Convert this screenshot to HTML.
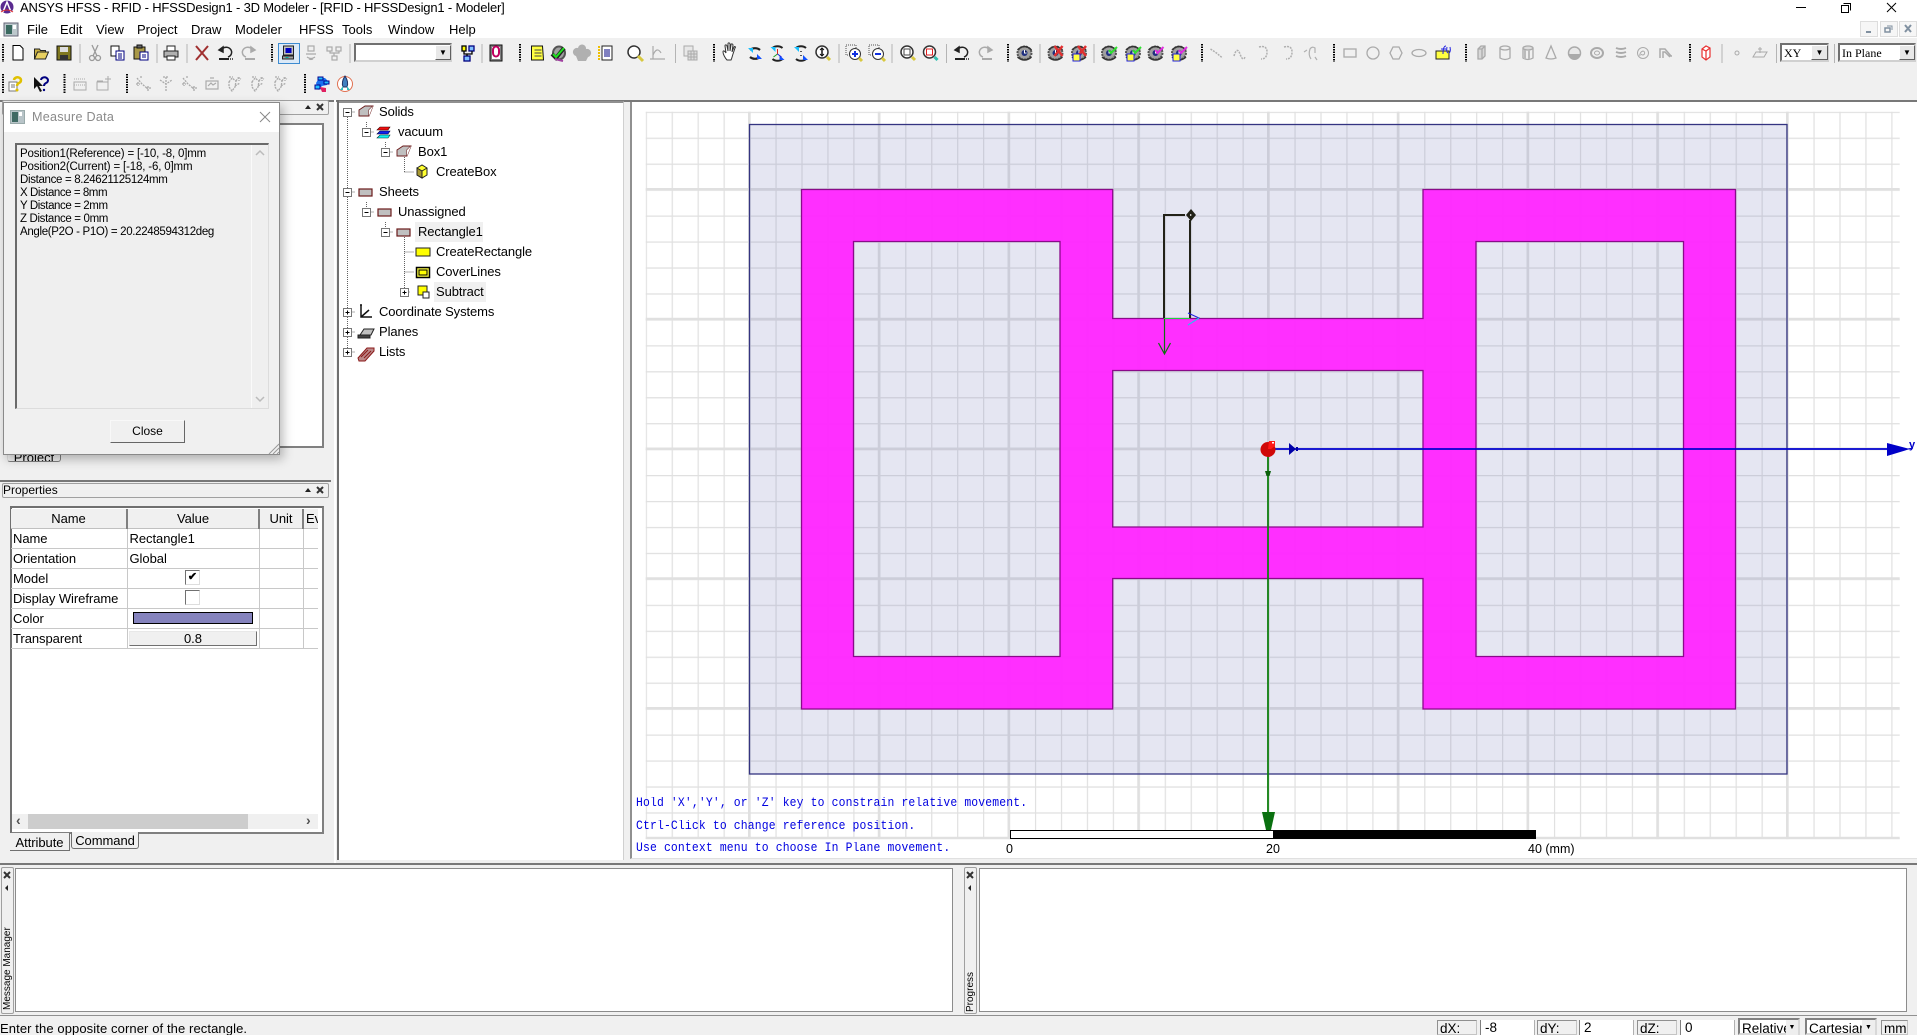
<!DOCTYPE html>
<html><head><meta charset="utf-8"><title>ANSYS HFSS</title>
<style>
html,body{margin:0;padding:0;background:#f0f0f0}
#p{position:relative;width:1917px;height:1035px;overflow:hidden;background:#f0f0f0;font:13px "Liberation Sans",sans-serif;color:#000}
#p div{position:absolute;box-sizing:border-box}
.t{white-space:nowrap;line-height:16px;height:16px}
.tr{white-space:nowrap;line-height:18px;height:18px;font-size:13px;letter-spacing:-.1px}
.m{font:11.4px "Liberation Mono",monospace;letter-spacing:.15px;color:#0000e0;white-space:nowrap;line-height:14px;transform-origin:left center;transform:scaleY(1.12)}
.sunk{border:2px solid #808080;background:#fff}
.bar{border:1px solid #a0a0a0;border-radius:2px;background:#f0f0f0}
.lb{background:#f0f0f0;border:1px solid #c4c4c4;border-top-color:#909090;border-left-color:#909090;padding-left:2px;line-height:16px;font-size:13.5px;white-space:nowrap;overflow:hidden}
.fd{background:#fff;border-left:1px solid #808080;border-right:1px solid #b0b0b0;padding-left:4px;line-height:16px;font-size:13.5px}
.cb{background:#fff;border:2px solid;border-color:#808080 #d8d8d8 #d8d8d8 #808080;white-space:nowrap;overflow:hidden}
table{border-collapse:collapse;table-layout:fixed;font-size:13px;letter-spacing:-.05px}
td{border:1px solid #c8c8c8;border-top:0;border-left:0;height:20px;padding:0 0 0 2px;box-sizing:border-box;overflow:hidden;white-space:nowrap}
th{font-weight:normal;height:19px;background:#f0f0f0;border-right:2px solid #808080;border-bottom:1px solid #c0c0c0;padding:0;box-sizing:border-box;overflow:hidden}
.dl{display:block;height:13px}
</style></head><body><div id="p">

<!-- title + menu -->
<div style="left:0;top:0;width:1917px;height:38px;background:#fff"></div>
<div class="t" style="left:20px;top:0;font-size:13px;letter-spacing:-.18px">ANSYS HFSS - RFID - HFSSDesign1 - 3D Modeler - [RFID - HFSSDesign1 - Modeler]</div>
<div class="t" style="left:27px;top:22px;font-size:13px">File</div>
<div class="t" style="left:60px;top:22px">Edit</div>
<div class="t" style="left:96px;top:22px">View</div>
<div class="t" style="left:137px;top:22px">Project</div>
<div class="t" style="left:191px;top:22px">Draw</div>
<div class="t" style="left:235px;top:22px">Modeler</div>
<div class="t" style="left:299px;top:22px">HFSS</div>
<div class="t" style="left:342px;top:22px">Tools</div>
<div class="t" style="left:388px;top:22px">Window</div>
<div class="t" style="left:449px;top:22px">Help</div>
<div style="left:0;top:100px;width:1917px;height:2px;background:#787878"></div>

<!-- left column panels -->
<div class="bar" style="left:2px;top:100px;width:327px;height:15px"></div>
<div class="sunk" style="left:12px;top:123px;width:312px;height:325px"></div>
<div style="left:7px;top:446px;width:54px;height:16px;background:#f0f0f0;border:1px solid #808080;border-top:0;border-left-color:#ddd;border-radius:0 0 3px 3px;text-align:center;line-height:24px;font-size:13px;overflow:hidden">Project</div>
<div style="left:0;top:480px;width:331px;height:2px;background:#787878"></div>
<div class="bar" style="left:2px;top:483px;width:327px;height:15px;line-height:13px;font-size:12px">Properties</div>
<div style="left:10px;top:506px;width:314px;height:328px;border:2px solid;border-color:#707070 #808080 #808080 #707070;background:#fff"></div>
<div style="left:11px;top:509px;overflow:hidden;width:307px;height:300px">
<table style="width:307px">
<colgroup><col style="width:116px"><col style="width:132px"><col style="width:44px"><col style="width:15px"></colgroup>
<tr><th>Name</th><th>Value</th><th>Unit</th><th style="border-right:0;text-align:left;padding-left:2px">Ev</th></tr>
<tr><td>Name</td><td>Rectangle1</td><td></td><td style="border-right:0"></td></tr>
<tr><td>Orientation</td><td>Global</td><td></td><td style="border-right:0"></td></tr>
<tr><td>Model</td><td></td><td></td><td style="border-right:0"></td></tr>
<tr><td>Display Wireframe</td><td></td><td></td><td style="border-right:0"></td></tr>
<tr><td>Color</td><td></td><td></td><td style="border-right:0"></td></tr>
<tr><td>Transparent</td><td></td><td></td><td style="border-right:0"></td></tr>
</table></div>
<div style="left:185px;top:570px;width:15px;height:15px;border:1px solid;border-color:#707070 #ddd #ddd #707070;background:#fff;font-size:11px;line-height:13px;text-align:center;font-weight:bold">✔</div>
<div style="left:185px;top:590px;width:15px;height:15px;border:1px solid;border-color:#707070 #ddd #ddd #707070;background:#fff"></div>
<div style="left:133px;top:612px;width:120px;height:12px;background:#8583bd;border:1px solid #000"></div>
<div style="left:129px;top:631px;width:128px;height:15px;background:#f0f0f0;border:1px solid;border-color:#e8e8e8 #707070 #707070 #e8e8e8;text-align:center;line-height:14px;font-size:13px">0.8</div>
<div style="left:12px;top:814px;width:306px;height:15px;background:#f0f0f0"></div>
<div style="left:28px;top:814px;width:220px;height:15px;background:#cdcdcd"></div>
<div style="left:16px;top:813px;font-size:14px;line-height:15px;color:#505050;font-weight:bold">‹</div>
<div style="left:306px;top:813px;font-size:14px;line-height:15px;color:#505050;font-weight:bold">›</div>
<div style="left:10px;top:833px;width:60px;height:18px;background:#f0f0f0;border-right:1px solid #707070;border-bottom:1px solid #707070;text-align:center;line-height:19px;font-size:13px;letter-spacing:-.05px">Attribute</div>
<div style="left:71px;top:832px;width:68px;height:17px;background:#f0f0f0;border:1px solid #707070;border-top:0;border-radius:0 0 3px 3px;text-align:center;line-height:17px;font-size:13px;letter-spacing:-.05px">Command</div>
<div style="left:334px;top:100px;width:2px;height:763px;background:#ffffff"></div>
<div style="left:337px;top:100px;width:2px;height:760px;background:#707070"></div>

<!-- tree panel -->
<div style="left:339px;top:101px;width:285px;height:759px;background:#fff;border-top:2px solid #909090;border-right:1px solid #d0d0d0"></div>
<div class="tr" style="left:379px;top:103px">Solids</div>
<div class="tr" style="left:398px;top:123px">vacuum</div>
<div class="tr" style="left:418px;top:143px">Box1</div>
<div class="tr" style="left:436px;top:163px">CreateBox</div>
<div class="tr" style="left:379px;top:183px">Sheets</div>
<div class="tr" style="left:398px;top:203px">Unassigned</div>
<div style="left:415px;top:222px;width:68px;height:20px;background:#f0f0f0"></div>
<div class="tr" style="left:418px;top:223px">Rectangle1</div>
<div class="tr" style="left:436px;top:243px">CreateRectangle</div>
<div class="tr" style="left:436px;top:263px">CoverLines</div>
<div style="left:434px;top:282px;width:52px;height:20px;background:#f0f0f0"></div>
<div class="tr" style="left:436px;top:283px">Subtract</div>
<div class="tr" style="left:379px;top:303px">Coordinate Systems</div>
<div class="tr" style="left:379px;top:323px">Planes</div>
<div class="tr" style="left:379px;top:343px">Lists</div>

<!-- canvas panel -->
<div style="left:630px;top:102px;width:1287px;height:757px;background:#fff;border-left:2px solid #909090;border-bottom:1px solid #e0e0e0"></div>

<!-- bottom panels -->
<div style="left:0;top:863px;width:1917px;height:2px;background:#787878"></div>
<div class="bar" style="left:1px;top:867px;width:13px;height:147px"></div>
<div style="left:15px;top:868px;width:938px;height:144px;background:#fff;border:1px solid #8c8c8c"></div>
<div class="bar" style="left:964px;top:867px;width:13px;height:147px"></div>
<div style="left:979px;top:868px;width:928px;height:144px;background:#fff;border:1px solid #8c8c8c"></div>
<div style="left:-34px;top:961px;width:84px;height:14px;transform:rotate(-90deg);font-size:10px;line-height:14px;white-space:nowrap;text-align:left">Message Manager</div>
<div style="left:951px;top:985px;width:40px;height:14px;transform:rotate(-90deg);font-size:10px;line-height:14px;white-space:nowrap">Progress</div>
<div style="left:0;top:1015px;width:1917px;height:1px;background:#909090"></div>
<div class="t" style="left:0;top:1021px;font-size:13px;letter-spacing:.1px">Enter the opposite corner of the rectangle.</div>
<div class="lb" style="left:1437px;top:1020px;width:40px;height:15px">dX:</div>
<div class="fd" style="left:1480px;top:1020px;width:55px;height:15px">-8</div>
<div class="lb" style="left:1537px;top:1020px;width:40px;height:15px">dY:</div>
<div class="fd" style="left:1579px;top:1020px;width:55px;height:15px">2</div>
<div class="lb" style="left:1637px;top:1020px;width:40px;height:15px">dZ:</div>
<div class="fd" style="left:1680px;top:1020px;width:55px;height:15px">0</div>
<div class="cb" style="left:1738px;top:1018px;width:62px;height:17px;font-size:13.5px;line-height:18px;padding-left:2px">Relative</div>
<div style="left:1786px;top:1020px;width:12px;height:15px;background:#eee;font-size:7px;line-height:15px;text-align:center">▼</div>
<div class="cb" style="left:1805px;top:1018px;width:72px;height:17px;font-size:13.5px;line-height:18px;padding-left:2px">Cartesian</div>
<div style="left:1862px;top:1020px;width:13px;height:15px;background:#eee;font-size:7px;line-height:15px;text-align:center">▼</div>
<div class="lb" style="left:1881px;top:1020px;width:27px;height:15px">mm</div>

<!-- toolbar combos -->
<div style="left:354px;top:43px;width:98px;height:19px;background:#fff;border:2px solid;border-color:#707070 #d0d0d0 #d0d0d0 #707070"></div>
<div style="left:435px;top:45px;width:16px;height:15px;background:#e8e8e8;border:1px solid;border-color:#fff #606060 #606060 #fff;font-size:8px;line-height:13px;text-align:center">▼</div>
<div style="left:1780px;top:43px;width:49px;height:19px;background:#fff;border:2px solid;border-color:#707070 #d0d0d0 #d0d0d0 #707070;font:12px/16px 'Liberation Serif',serif;padding-left:2px">XY</div>
<div style="left:1811px;top:45px;width:17px;height:15px;background:#e8e8e8;border:1px solid;border-color:#fff #606060 #606060 #fff;font-size:8px;line-height:13px;text-align:center">▼</div>
<div style="left:1838px;top:43px;width:78px;height:19px;background:#fff;border:2px solid;border-color:#707070 #d0d0d0 #d0d0d0 #707070;font:12px/16px 'Liberation Serif',serif;padding-left:2px">In Plane</div>
<div style="left:1899px;top:45px;width:16px;height:15px;background:#e8e8e8;border:1px solid;border-color:#fff #606060 #606060 #fff;font-size:8px;line-height:13px;text-align:center">▼</div>
<div style="left:278px;top:43px;width:22px;height:21px;background:#dbe9f7;border:1px solid #3d8bd0"></div>

<!-- full page svg: graphics -->
<svg width="1917" height="1035" viewBox="0 0 1917 1035" style="position:absolute;left:0;top:0" xmlns="http://www.w3.org/2000/svg">
<defs>
<pattern id="gn" x="645.7" y="111.7" width="25.95" height="25.95" patternUnits="userSpaceOnUse"><path d="M.6 0V25.95M0 .6H25.95" stroke="#e0e0e0" stroke-width="1.2" fill="none"/></pattern>
<pattern id="gm" x="748" y="188" width="129.75" height="129.75" patternUnits="userSpaceOnUse"><path d="M1.2 0V129.75M0 1.2H129.75" stroke="#e0e0e0" stroke-width="2.4" fill="none"/></pattern>

<g id="new"><path d="M-5-7.5h7l3 3v11.5h-10z" fill="#fff" stroke="#000"/></g>
<g id="open"><path d="M-7 6v-10h5l1 1.500h5v8.500z" fill="#c8b040" stroke="#222"/><path d="M-7 6l3-7h11l-3 7z" fill="#e8d060" stroke="#222"/></g>
<g id="save"><rect x="-7" y="-7" width="14" height="14" fill="#807820" stroke="#111"/><rect x="-4" y="-6" width="8" height="5" fill="#ddd"/><rect x="-4" y="2" width="8" height="5" fill="#333"/></g>
<g id="cut" fill="none" stroke="#9a9a9a" stroke-width="1.300"><path d="M-3-8L2 3M3-8L-2 3"/><circle cx="-3" cy="5" r="2.500"/><circle cx="3" cy="5" r="2.500"/></g>
<g id="copy"><path d="M-7-7h8v10h-8z" fill="#fff" stroke="#111"/><path d="M-2-2h8v9h-8z" fill="#fff" stroke="#000080"/><path d="M0 1h4M0 3h4M0 5h4" stroke="#000080"/></g>
<g id="paste"><rect x="-7" y="-6" width="11" height="12" fill="#a89848" stroke="#111"/><rect x="-4" y="-8" width="5" height="3" fill="#666" stroke="#111"/><path d="M-1-1h8v8h-8z" fill="#fff" stroke="#000080"/><path d="M1 2h4M1 4h4" stroke="#000080"/></g>
<g id="print"><path d="M-4-7h8v5h-8z" fill="#fff" stroke="#222"/><rect x="-7" y="-2" width="14" height="6" fill="#b0b0b0" stroke="#222"/><path d="M-4 3h8v4h-8z" fill="#fff" stroke="#222"/></g>
<g id="del"><path d="M-6-7L6 7M6-7L-6 7" stroke="#a03030" stroke-width="2"/></g>
<g id="undo" fill="none" stroke="#222" stroke-width="1.500"><path d="M-4-4a5.500 5 0 1 1 6 8"/><path d="M-7-3l4-3v5z" fill="#222"/><path d="M-7 6h10" stroke-width="2"/><path d="M4 6h3" stroke-dasharray="1 1"/></g>
<g id="redo" fill="none" stroke="#aaa" stroke-width="1.500"><path d="M4-4a5.500 5 0 1 0-6 8"/><path d="M7-3l-4-3v5z" fill="#aaa"/><path d="M-3 6h10" stroke-width="2"/></g>
<g id="pc"><rect x="-5" y="-7" width="10" height="9" fill="#c0c0c0" stroke="#222"/><rect x="-3" y="-5" width="6" height="5" fill="#0000c0"/><rect x="-6" y="3" width="11" height="3" fill="#a0a0a0" stroke="#222"/><rect x="-3" y="4" width="3" height="1" fill="#00b0a0"/></g>
<g id="gnet" fill="none" stroke="#aaa" stroke-width="1.200"><rect x="-3" y="-7" width="6" height="5"/><path d="M-5 1h10M-4 4q4 3 8 0M-2 6q2 1 4 0"/></g>
<g id="gtree" fill="none" stroke="#aaa" stroke-width="1.200"><rect x="-7" y="-6" width="5" height="4"/><rect x="2" y="-6" width="5" height="4"/><rect x="-2" y="3" width="5" height="4"/><path d="M-4-2v2h9v-2M0 0v3"/></g>
<g id="tree2" fill="none" stroke-width="1.300"><rect x="-5" y="-7" width="4" height="5" fill="#ffff00" stroke="#000"/><rect x="2" y="-7" width="5" height="5" fill="#80c0ff" stroke="#000080"/><rect x="-3" y="3" width="6" height="5" fill="#80c0ff" stroke="#000080"/><path d="M-3-2v3h8v-3M0 1v2" stroke="#000"/></g>
<g id="q3"><rect x="-6" y="-8" width="12" height="16" fill="#808080" stroke="#111"/><rect x="-4" y="-6" width="8" height="12" fill="#fff"/><path d="M-3-3a3 3.500 0 1 1 6 0v3a3 3.500 0 1 1-6 0z" fill="none" stroke="#c00060" stroke-width="2"/></g>
<g id="sheet"><path d="M-6-7h11l1 14h-12z" fill="#ffff40" stroke="#111"/><path d="M-3-3h7M-3 0h7M-3 3h7" stroke="#444"/></g>
<g id="chk"><ellipse rx="6" ry="6.500" fill="#a0a0a0" stroke="#555" stroke-width="2"/><path d="M-7 1l4 4 8-10" fill="none" stroke="#222" stroke-width="4"/><path d="M-6 1l3 3 8-9" fill="none" stroke="#20e020" stroke-width="2"/><path d="M-4 6l8 2" stroke="#a040a0" stroke-width="2"/></g>
<g id="blob"><path d="M-6 3a4 4 0 0 1 2-8a4 4 0 0 1 8 1a4 4 0 0 1 2 8l-2 4h-8z" fill="#b0b0b0"/></g>
<g id="page"><rect x="-4" y="-7" width="10" height="14" fill="#fff" stroke="#222"/><path d="M-2-3h6M-2-1h6M-2 1h6M-2 3h6" stroke="#000080"/><path d="M-7-7v14" stroke="#f0c000" stroke-dasharray="2 1" stroke-width="2"/></g>
<g id="mag"><circle cx="-1" cy="-1" r="6" fill="#fff" stroke="#333" stroke-width="1.500"/><path d="M3 3l5 5" stroke="#d8c840" stroke-width="3"/></g>
<g id="graph" fill="none" stroke="#aaa" stroke-width="1.200"><path d="M-5-7v13h12M-8 6h5"/><path d="M-5 2q4-9 8-2"/></g>
<g id="gsh" fill="none" stroke="#aaa"><rect x="-6" y="-7" width="9" height="10" fill="#e8e8e8"/><rect x="-2" y="-2" width="9" height="9" fill="#ddd"/><path d="M-2 1h9M-2 4h9M1-2v9M4-2v9"/></g>
<g id="hand"><path d="M-4 7c-2-2-4-6-4-8s2-1 3 1l-1-7c0-2 2-1 2 0l1 5 0-7c0-2 2-1 2 0l0 7 1-6c0-2 2-1 2 0l-1 7 2-5c1-1 2 0 1 1l-2 6c-1 3-1 4-2 6z" fill="#fff" stroke="#333"/></g>
<g id="rot" fill="none" stroke="#222" stroke-width="2.200"><path d="M-5-3a7 6 0 0 1 10 0M5 4a7 6 0 0 1-10 0"/><path d="M-7-5h5v5z" fill="#18c0ff" stroke="none"/><path d="M7 6h-5v-5z" fill="#1050ff" stroke="none"/></g>
<g id="rot3" fill="none" stroke="#222" stroke-width="2"><path d="M-5-5a7 6 0 0 1 10 0M-5 6a7 6 0 0 0 10 0"/><path d="M-7-6h5v5z" fill="#18c0ff" stroke="none"/><path d="M7 7h-5v-5z" fill="#1050ff" stroke="none"/><path d="M0-4v5" stroke="#e02020" stroke-width="1"/><path d="M0 1l-4 3" stroke="#20a020" stroke-width="1"/><path d="M0 1l4 3" stroke="#2020e0" stroke-width="1"/></g>
<g id="rot2" fill="none" stroke="#222" stroke-width="2"><path d="M-5-5a7 6 0 0 1 10 0M5 6a7 6 0 0 1-10 0"/><path d="M-7-6h5v5z" fill="#18c0ff" stroke="none"/><path d="M7 7h-5v-5z" fill="#1050ff" stroke="none"/><path d="M0-2v1M0 2v1" stroke-width="1.500"/></g>
<g id="zud"><circle cx="-1" cy="-1" r="6" fill="#fff" stroke="#333" stroke-width="1.500"/><path d="M-1-5v8" stroke="#111" stroke-width="1.500"/><path d="M-3-3l2-2 2 2M-3 1l2 2 2-2" fill="none" stroke="#111"/><path d="M4 4l3 3" stroke="#d8c840" stroke-width="3"/></g>
<g id="zin"><rect x="-8" y="-8" width="10" height="10" fill="none" stroke="#555" stroke-dasharray="1 1"/><circle cx="1" cy="1" r="5.500" fill="#fff" stroke="#333"/><path d="M-2 1h6M1-2v6" stroke="#1030e0" stroke-width="2"/><path d="M5 5l3 3" stroke="#d8c840" stroke-width="3"/></g>
<g id="zout"><rect x="-8" y="-8" width="10" height="10" fill="none" stroke="#555" stroke-dasharray="1 1"/><circle cx="1" cy="1" r="5.500" fill="#fff" stroke="#333"/><path d="M-2 1h6" stroke="#1030e0" stroke-width="2"/><path d="M5 5l3 3" stroke="#d8c840" stroke-width="3"/></g>
<g id="zfit"><circle cx="-1" cy="-1" r="6" fill="#fff" stroke="#333" stroke-width="1.500"/><rect x="-4" y="-4" width="6" height="6" fill="none" stroke="#444"/><path d="M4 4l3 3" stroke="#d8c840" stroke-width="3"/></g>
<g id="zfit2"><circle cx="-1" cy="-1" r="6" fill="#fff" stroke="#333" stroke-width="1.500"/><rect x="-4" y="-4" width="6" height="6" fill="none" stroke="#e02020"/><path d="M4 4l3 3" stroke="#30c0b0" stroke-width="3"/></g>
<g id="eye"><ellipse rx="7" ry="6.500" fill="#a0a0a0" stroke="#555" stroke-width="2" stroke-dasharray="2 1"/><circle r="3" fill="#203080"/><path d="M-7-3q7-7 14 0M-7 4q7 6 14 0" fill="none" stroke="#333" stroke-width="1.500"/><path d="M0-3v3h2" stroke="#fff"/></g>
<g id="eyex"><use href="#eye"/><path d="M-1-7L7 3M7-7L-1 3" stroke="#e03030" stroke-width="2.500"/></g>
<g id="eyexb"><use href="#eye"/><path d="M-1-7L7 3M7-7L-1 3" stroke="#e03030" stroke-width="2.500"/><rect x="-6" y="1" width="7" height="7" fill="#ffff40" stroke="#2020e0"/></g>
<g id="eyeg"><use href="#eye"/><path d="M0-3l2 3 6-6" fill="none" stroke="#30e030" stroke-width="2"/></g>
<g id="eyegb"><use href="#eyeg"/><rect x="-6" y="1" width="7" height="7" fill="#ffff40" stroke="#2020e0"/></g>
<g id="eyep"><use href="#eye"/><path d="M0-3l2 3 6-6" fill="none" stroke="#e030e0" stroke-width="2"/></g>
<g id="eyepb"><use href="#eyep"/><rect x="-6" y="1" width="7" height="7" fill="#ffff40" stroke="#2020e0"/></g>
<g id="g1" fill="none" stroke="#b0b0b0" stroke-width="1.500" stroke-dasharray="2 1"><path d="M-7-4l6 4 6 5"/></g>
<g id="g2" fill="none" stroke="#b0b0b0" stroke-width="1.500" stroke-dasharray="2 1"><path d="M-7 3q3-10 6-2t5 3"/></g>
<g id="g3" fill="none" stroke="#b0b0b0" stroke-width="1.500" stroke-dasharray="2 1"><path d="M-5-6q8-2 8 5t-6 7"/></g>
<g id="g4" fill="none" stroke="#b0b0b0" stroke-width="1.200"><path d="M-8-1l3-2M-1 6q-3-4-1-10q2-3 5-1v5M3 4l2 3"/></g>
<g id="grect"><rect x="-6" y="-4" width="12" height="8" fill="none" stroke="#aaa" stroke-width="1.300"/></g>
<g id="gcirc"><circle r="6" fill="none" stroke="#aaa" stroke-width="1.300"/></g>
<g id="ghex"><path d="M-3-6h6l3 6-3 6h-6l-3-6z" fill="none" stroke="#aaa" stroke-width="1.300"/></g>
<g id="gell"><ellipse rx="7" ry="3.500" fill="none" stroke="#aaa" stroke-width="1.300"/></g>
<g id="fx"><rect x="-7" y="-2" width="13" height="8" fill="#ffff40" stroke="#222"/><path d="M0 1q0-8 3-8M-2-4h5M4-6q-1 5 1 6M7-6q1 5-1 6" fill="none" stroke="#2020e0"/></g>
<g id="gbox" fill="none" stroke="#aaa" stroke-width="1.300"><path d="M-4-4l3-3h4v10l-3 3h-4z" fill="#d8d8d8"/><path d="M-4-4h4v10M0-4l3-3"/></g>
<g id="gcyl" fill="none" stroke="#aaa" stroke-width="1.300"><ellipse cy="-5" rx="5" ry="2"/><path d="M-5-5v10q5 3 10 0v-10"/></g>
<g id="gcyl2" fill="none" stroke="#aaa" stroke-width="1.300"><ellipse cy="-5" rx="5" ry="2" fill="#ddd"/><path d="M-5-5v10q5 3 10 0v-10"/><path d="M-3-3v9M1-3v9" stroke="#bbb" stroke-width="2"/></g>
<g id="gcone" fill="none" stroke="#aaa" stroke-width="1.300"><path d="M0-7l-5 12q5 2 10 0z"/></g>
<g id="gsph"><circle r="6" fill="#e8e8e8" stroke="#aaa" stroke-width="1.500"/><path d="M-6 1a6 6 0 0 0 12 0" fill="#aaa"/></g>
<g id="gtor"><ellipse rx="6" ry="5" fill="none" stroke="#aaa" stroke-width="2"/><ellipse rx="2.500" ry="2" fill="none" stroke="#aaa"/></g>
<g id="ghel" fill="none" stroke="#aaa" stroke-width="2"><path d="M-5-5q5 2 10 0M-5-1q5 2 10 0M-5 3q5 2 10 0"/></g>
<g id="gspi" fill="none" stroke="#aaa"><circle r="5.500"/><path d="M-2 1a2 2 0 1 0 2-3a4 4 0 0 0-3 5"/></g>
<g id="gbond" fill="none" stroke="#aaa" stroke-width="1.500"><path d="M-6 5v-9h5l6 7h1M-3 5v-6h2l5 5"/></g>
<g id="redbox" fill="none" stroke="#e83030" stroke-width="1.200"><path d="M-4-4l4-3 4 2v9l-4 3-4-3z" fill="#fff"/><path d="M-4-4l4 2 4-3M0-2v9"/></g>
<g id="gdot"><circle r="2" fill="none" stroke="#aaa"/></g>
<g id="gplane" fill="none" stroke="#aaa"><path d="M-7 4l3-5h11l-3 5z"/><path d="M0-6v6M-2-4h4"/></g>
<g id="help"><rect x="-8" y="-2" width="8" height="9" fill="#fff" stroke="#777"/><path d="M-6 1h4M-6 3h4" stroke="#777"/><path d="M-3-4a3.500 3 0 1 1 5 3q-2 1-2 3" fill="none" stroke="#e0c000" stroke-width="2.500"/><circle cy="6" r="1.500" fill="#e0c000"/></g>
<g id="whats"><path d="M-7-7v12l3-3 3 6 2-1-3-5h4z" fill="#111"/><path d="M0-4a3.500 3 0 1 1 5 3q-2 1-2 3" fill="none" stroke="#000080" stroke-width="2"/><circle cx="3" cy="6" r="1.200" fill="#000080"/></g>
<g id="gadd" fill="none" stroke="#aaa"><rect x="-6" y="-2" width="12" height="8"/><path d="M-6-5h12M-6 1h12" stroke-dasharray="1 1"/></g>
<g id="gadd2" fill="none" stroke="#aaa"><rect x="-6" y="-2" width="11" height="8"/><path d="M5-8v6M2-5h6M-6-3h6"/></g>
<g id="gm1" fill="none" stroke="#aaa" stroke-dasharray="2 1" stroke-width="1.300"><path d="M-6-6l5 6 6 5M-7 0h4M-5-2v4M3 4h5M5 2v5M-3-7h3"/></g>
<g id="gm2" fill="none" stroke="#aaa" stroke-dasharray="2 1" stroke-width="1.300"><path d="M0-7V7M-6-4l6 4 6-4M-3-7h6"/></g>
<g id="gm3" fill="none" stroke="#aaa" stroke-width="1.200"><rect x="-6" y="-3" width="12" height="8"/><path d="M-4 2l3-3 2 2 3-2"/><path d="M-2-6h4"/></g>
<g id="gm4" fill="none" stroke="#aaa" stroke-dasharray="2 1" stroke-width="1.300"><path d="M-6-2l3-4 4 3-1 6-3 4-3-4zM1-3l2-3 3 1M4-7v4M-6-7h4M0 2l5-3"/></g>
<g id="solve"><path d="M-6-1l3-5h6l3 3-1 4-5 1-4 4z" fill="#1a70f0"/><path d="M-4-7h5v3h-5zM2-3h5v3h-5zM-7 1h5v4h-5z" fill="#20c0ff" stroke="#000090"/><path d="M-2 3l6 1v4h-4z" fill="#e02060"/></g>
<g id="rocket"><circle r="7.500" fill="#fff" stroke="#e07050"/><path d="M0-8q4 6 2 11h-4q-2-5 2-11z" fill="#4080c0" stroke="#203060"/><path d="M-2 2l-3 4h3zM2 2l3 4h-3z" fill="#30c0c0"/></g>
<g id="ctrlx"><path d="M-3-3l6 6M3-3l-6 6" stroke="#333" stroke-width="2"/></g>
<g id="up"><path d="M-3 2h6l-3-4z" fill="#222"/></g>
<g id="mn"><rect x="-4" y="-4" width="8" height="8" fill="#fff" stroke="#777"/><path d="M-2 0h4" stroke="#000"/></g>
<g id="pl"><rect x="-4" y="-4" width="8" height="8" fill="#fff" stroke="#777"/><path d="M-2 0h4M0-2v4" stroke="#000"/></g>
<g id="ibox"><path d="M-7 5V-1L-1-5H7L3 5z" fill="#c0c0c0" stroke="#6a1a1a" stroke-width=".9"/><path d="M3 5L3-1L7-5" fill="none" stroke="#6a1a1a"/><path d="M3-1L7-5L3 5z" fill="#fff"/></g>
<g id="isheet"><rect x="-7" y="-3" width="13" height="7" fill="#c0c0c0" stroke="#6a1a1a" stroke-width="1.200"/></g>
<g id="ivac"><path d="M-8-2l3-3h10l-2 3z" fill="#f01010" stroke="#300" stroke-width=".6"/><path d="M-8 2l3-3h10l-2 3z" fill="#1020f0" stroke="#003" stroke-width=".6"/><path d="M-8 6l3-3h10l-2 3z" fill="#10f0f0" stroke="#033" stroke-width=".6"/></g>
<g id="icbox"><path d="M-5-3L0-6L5-3V4L0 7L-5 4Z" fill="#ffff30" stroke="#222"/><path d="M-5-3L0 0V7L-5 4Z" fill="#a89830" stroke="#222"/><path d="M0 0L5-3" stroke="#222"/></g>
</defs>

<!-- window bits -->
<circle cx="7" cy="7" r="6.500" fill="#5a2a90"/><path d="M3 12l4-10 4 10" fill="none" stroke="#fff" stroke-width="1.500"/><path d="M1 12q6-4 12 0" fill="none" stroke="#e03030"/>
<rect x="4" y="23" width="14" height="13" fill="#bcc8cc" stroke="#667"/><rect x="6" y="25" width="6" height="9" fill="#3a6a60"/><rect x="13" y="25" width="3" height="4" fill="#fff"/>
<path d="M1796 7.500h10" stroke="#000"/><rect x="1841.500" y="5.500" width="7" height="7" fill="#fff" stroke="#000"/><path d="M1843.500 3.500h7v7" fill="none" stroke="#000"/>
<path d="M1887 3l9 9M1896 3l-9 9" stroke="#000"/>
<rect x="1860.500" y="21.500" width="17" height="15" fill="#f6f6f6" stroke="#ddd"/><path d="M1866 32h5" stroke="#8090a0" stroke-width="2"/>
<rect x="1880.500" y="21.500" width="17" height="15" fill="#f6f6f6" stroke="#ddd"/><rect x="1885" y="28" width="5" height="4" fill="none" stroke="#8090a0" stroke-width="1.500"/><path d="M1887 26h5v4" fill="none" stroke="#8090a0"/>
<rect x="1899.500" y="21.500" width="17" height="15" fill="#f6f6f6" stroke="#ddd"/><path d="M1905 25l6 7M1911 25l-6 7" stroke="#8090a0" stroke-width="2"/>

<!-- grips -->
<g stroke="#000" stroke-width="2" stroke-dasharray="1.500 1" fill="none">
<path d="M272 44v18M520 44v18M714 44v18M1008 44v18M1202 44v18M1334 44v18M1466 44v18M1690 44v18M3 44v18"/>
<path d="M64.500 74v19M127 74v19M305 74v19M3 74v19"/>
</g>
<g stroke="#b4b4b4" fill="none"><path d="M80 44v19M157 44v19M187 44v19M350 44v19M482 44v19M675.500 44v19M839 44v19M892 44v19M946.500 44v19M1040 44v19M1094 44v19M1722 44v19M1776.500 44v19M1834.500 44v19"/></g>

<!-- toolbar 1 -->
<g transform="translate(0,53)">
<use href="#new" x="18"/><use href="#open" x="41.500"/><use href="#save" x="64"/><use href="#cut" x="95"/><use href="#copy" x="118"/><use href="#paste" x="141"/><use href="#print" x="171"/><use href="#del" x="202"/><use href="#undo" x="226"/><use href="#redo" x="248"/><use href="#pc" x="288.500"/><use href="#gnet" x="311"/><use href="#gtree" x="334"/><use href="#tree2" x="467"/><use href="#q3" x="496"/><use href="#sheet" x="537.500"/><use href="#chk" x="559"/><use href="#blob" x="582"/><use href="#page" x="606"/><use href="#mag" x="635"/><use href="#graph" x="658"/><use href="#gsh" x="690"/><use href="#hand" x="731"/><use href="#rot" x="755"/><use href="#rot3" x="777.500"/><use href="#rot2" x="801"/><use href="#zud" x="823"/><use href="#zin" x="854"/><use href="#zout" x="877"/><use href="#zfit" x="908"/><use href="#zfit2" x="930.500"/><use href="#undo" x="962"/><use href="#redo" x="985"/><use href="#eye" x="1024.500"/><use href="#eyex" x="1055.500"/><use href="#eyexb" x="1079"/><use href="#eyeg" x="1109"/><use href="#eyegb" x="1133"/><use href="#eyep" x="1155.500"/><use href="#eyepb" x="1179"/><use href="#g1" x="1217.500"/><use href="#g2" x="1241"/><use href="#g3" x="1289"/><use href="#g3" x="1264"/><use href="#g4" x="1312"/><use href="#grect" x="1350"/><use href="#gcirc" x="1373"/><use href="#ghex" x="1396"/><use href="#gell" x="1419"/><use href="#fx" x="1443"/><use href="#gbox" x="1482"/><use href="#gcyl" x="1505"/><use href="#gcyl2" x="1528"/><use href="#gcone" x="1551"/><use href="#gsph" x="1574.500"/><use href="#gtor" x="1597"/><use href="#ghel" x="1621"/><use href="#gspi" x="1643"/><use href="#gbond" x="1666"/><use href="#redbox" x="1706"/><use href="#gdot" x="1737"/><use href="#gplane" x="1760"/>
</g>
<!-- toolbar 2 -->
<g transform="translate(0,84)">
<use href="#help" x="17"/><use href="#whats" x="41"/><use href="#gadd" x="80"/><use href="#gadd2" x="103"/><use href="#gm1" x="143"/><use href="#gm2" x="166"/><use href="#gm1" x="189"/><use href="#gm3" x="212"/><use href="#gm4" x="235"/><use href="#gm4" x="258"/><use href="#gm4" x="281"/><use href="#solve" x="322"/><use href="#rocket" x="345"/>
</g>
<!-- panel ctrl -->
<use href="#up" x="308" y="107"/><use href="#ctrlx" x="320" y="107"/><use href="#up" x="308" y="490"/><use href="#ctrlx" x="320" y="490"/>
<use href="#ctrlx" x="7" y="875"/><path d="M5 888l3-3v6z" fill="#222"/><use href="#ctrlx" x="970" y="875"/><path d="M968 888l3-3v6z" fill="#222"/>

<!-- tree lines -->
<g stroke="#606060" stroke-dasharray="1 1" fill="none">
<path d="M347.500 117V352M347.500 112h8M347.500 192h8M347.500 312h8M347.500 332h8M347.500 352h8M366.500 122v10M366.500 132h8M366.500 202v10M366.500 212h8M385.500 142v10M385.500 152h8M385.500 222v10M385.500 232h8M404.500 157v15M404.500 172h10M404.500 237v55M404.500 252h10M404.500 272h10M404.500 292h6"/>
</g>
<use href="#mn" x="347.500" y="112.500"/><use href="#mn" x="366.500" y="132.500"/><use href="#mn" x="385.500" y="152.500"/><use href="#mn" x="347.500" y="192.500"/><use href="#mn" x="366.500" y="212.500"/><use href="#mn" x="385.500" y="232.500"/><use href="#pl" x="404.500" y="292.500"/><use href="#pl" x="347.500" y="312.500"/><use href="#pl" x="347.500" y="332.500"/><use href="#pl" x="347.500" y="352.500"/>
<use href="#ibox" x="366" y="111"/><use href="#ivac" x="385" y="132"/><use href="#ibox" x="404" y="151"/><use href="#icbox" x="422" y="171"/>
<use href="#isheet" x="366" y="192"/><use href="#isheet" x="385" y="212"/><use href="#isheet" x="404" y="232"/>
<rect x="416" y="248" width="14" height="8" fill="#ffff00" stroke="#222"/>
<rect x="416.500" y="267.500" width="13" height="10" fill="#ffff40" stroke="#000" stroke-width="1.500"/><rect x="419" y="270" width="8" height="5" fill="#ffff00" stroke="#000"/>
<rect x="418" y="286" width="9" height="9" fill="#ffff00" stroke="#222"/><rect x="423" y="292" width="6" height="6" fill="#fff" stroke="#222"/>
<g fill="none" stroke="#111" stroke-width="1.500"><path d="M361 305v12h9M361 317l8-7"/></g>
<circle cx="361" cy="305" r="1" fill="#111"/><circle cx="371" cy="317" r="1" fill="#111"/>
<g stroke="#222" fill="#c0c0c0"><path d="M360 335l4-6h10l-3 6z"/><path d="M358 335h12v3h-12z" fill="#444"/></g>
<g><path d="M358 358l9-10h7v3l-9 10h-6z" fill="#b88" stroke="#8b1a1a"/><path d="M361 357l7-7M364 358l7-7" stroke="#8b1a1a"/></g>

<!-- canvas graphics -->
<rect x="645.700" y="111.700" width="1254" height="727.500" fill="url(#gn)"/>
<rect x="645.700" y="111.700" width="1254" height="727.500" fill="url(#gm)"/>
<rect x="749.500" y="124.500" width="1037.500" height="649.500" fill="#7d82be" fill-opacity=".2" stroke="#343481" stroke-width="1.300"/>
<path fill-rule="evenodd" d="M801.500 189.500H1112.700V318.500H1423V189.500H1735.500V709H1423V578.500H1112.700V709H801.500ZM853.500 241.500V656.500H1060V241.500ZM1476 241.500V656.500H1683.500V241.500ZM1112.700 370.500V527H1423V370.500Z" fill="#ff28ff" fill-opacity=".97" stroke="#8a0a8a" stroke-width="1.300"/>

<!-- measure -->
<path d="M1164 318V215H1185M1190 220V318" fill="none" stroke="#222218" stroke-width="2"/>
<path d="M1191 209l5 6-5 6-5-6z" fill="#222218"/><path d="M1190 214l2 1-2 1z" fill="#fff"/>
<path d="M1164 318.500h26" stroke="#20d040"/><path d="M1164.500 319V354M1158.500 343l6 11 6-11" fill="none" stroke="#107010" stroke-width="1.200"/>
<path d="M1188 313l11 5-11 7" fill="none" stroke="#2020e0"/><path d="M1199 318l-11 7" stroke="#20e0f0"/>

<!-- axes -->
<path d="M1268 449H1892" stroke="#0000d0" stroke-width="1.800"/>
<path d="M1289 443l7 6-7 6z M1296 447h2v4h-2z" fill="#0000a8"/>
<path d="M1887 443l23 6-23 7z" fill="#0000c8"/><path d="M1908 449l5-1" stroke="#0000c8"/>
<path d="M1268 449V815" stroke="#108010" stroke-width="1.800"/>
<path d="M1265 471h6l-1.500 5h-3z" fill="#0c600c"/>
<path d="M1262 812h13l-4 18h-5z" fill="#0a7010"/>
<circle cx="1268" cy="449.500" r="7.500" fill="#d00808"/><path d="M1269 441h6v5l-4 3h-3z" fill="#ff1818"/><rect x="1272" y="442" width="2" height="1.500" fill="#fff"/>
<text x="1909" y="448" font-size="11" font-family="Liberation Sans" font-weight="bold" fill="#0000c8">y</text>

<!-- scale bar -->
<rect x="1010.500" y="830.500" width="263" height="8" fill="#fff" stroke="#000"/><rect x="1273" y="830" width="263" height="9" fill="#000"/>
</svg>

<div class="m" style="left:636px;top:797px">Hold 'X','Y', or 'Z' key to constrain relative movement.</div>
<div class="m" style="left:636px;top:820px">Ctrl-Click to change reference position.</div>
<div class="m" style="left:636px;top:842px">Use context menu to choose In Plane movement.</div>
<div class="t" style="left:1006px;top:841px;font-size:12.5px">0</div>
<div class="t" style="left:1266px;top:841px;font-size:12.5px">20</div>
<div class="t" style="left:1528px;top:841px;font-size:12.5px">40 (mm)</div>

<!-- Measure dialog -->
<div style="left:3px;top:102px;width:277px;height:353px;background:#f0f0f0;border:1px solid #8a8a8a;box-shadow:3px 4px 10px rgba(0,0,0,.28)"></div>
<div style="left:4px;top:103px;width:275px;height:29px;background:#fff"></div>
<div class="t" style="left:32px;top:109px;font-size:12.6px;color:#8a8a8a;letter-spacing:.25px">Measure Data</div>
<div style="left:15px;top:143px;width:254px;height:266px;background:#efefef;border:1px solid;border-color:#6a6a6a #dcdcdc #dcdcdc #6a6a6a;border-width:2px 1px 1px 2px"></div>
<div style="left:251px;top:145px;width:1px;height:263px;background:#fafafa"></div>
<div style="left:20px;top:148px;font-size:11.5px;line-height:13px;white-space:nowrap">
<span class="dl" style="letter-spacing:-.18px">Position1(Reference) = [-10, -8, 0]mm</span>
<span class="dl" style="letter-spacing:-.16px">Position2(Current) = [-18, -6, 0]mm</span>
<span class="dl" style="letter-spacing:-.33px">Distance = 8.24621125124mm</span>
<span class="dl" style="letter-spacing:-.45px">X Distance = 8mm</span>
<span class="dl" style="letter-spacing:-.4px">Y Distance = 2mm</span>
<span class="dl" style="letter-spacing:-.35px">Z Distance = 0mm</span>
<span class="dl" style="letter-spacing:-.33px">Angle(P2O - P1O) = 20.2248594312deg</span>
</div>
<div style="left:110px;top:420px;width:75px;height:23px;background:#f0f0f0;border:1px solid;border-color:#f8f8f8 #666 #666 #f8f8f8;text-align:center;line-height:21px;font-size:12px">Close</div>
<svg width="1917" height="1035" style="position:absolute;left:0;top:0;pointer-events:none">
<rect x="10.500" y="110.500" width="14" height="13" fill="#b8c4c8" stroke="#9aa"/><rect x="12" y="112" width="6" height="10" fill="#406a64"/><rect x="19" y="112" width="3" height="4" fill="#fff"/>
<path d="M260 112l10 10M270 112l-10 10" stroke="#888"/>
<path d="M256 155l4-4 4 4M256 397l4 4 4-4" fill="none" stroke="#bbb" stroke-width="1.500"/>
<path d="M279 444l-10 10M279 448l-6 6M279 452l-2 2" stroke="#999"/>
</svg>
</div></body></html>
